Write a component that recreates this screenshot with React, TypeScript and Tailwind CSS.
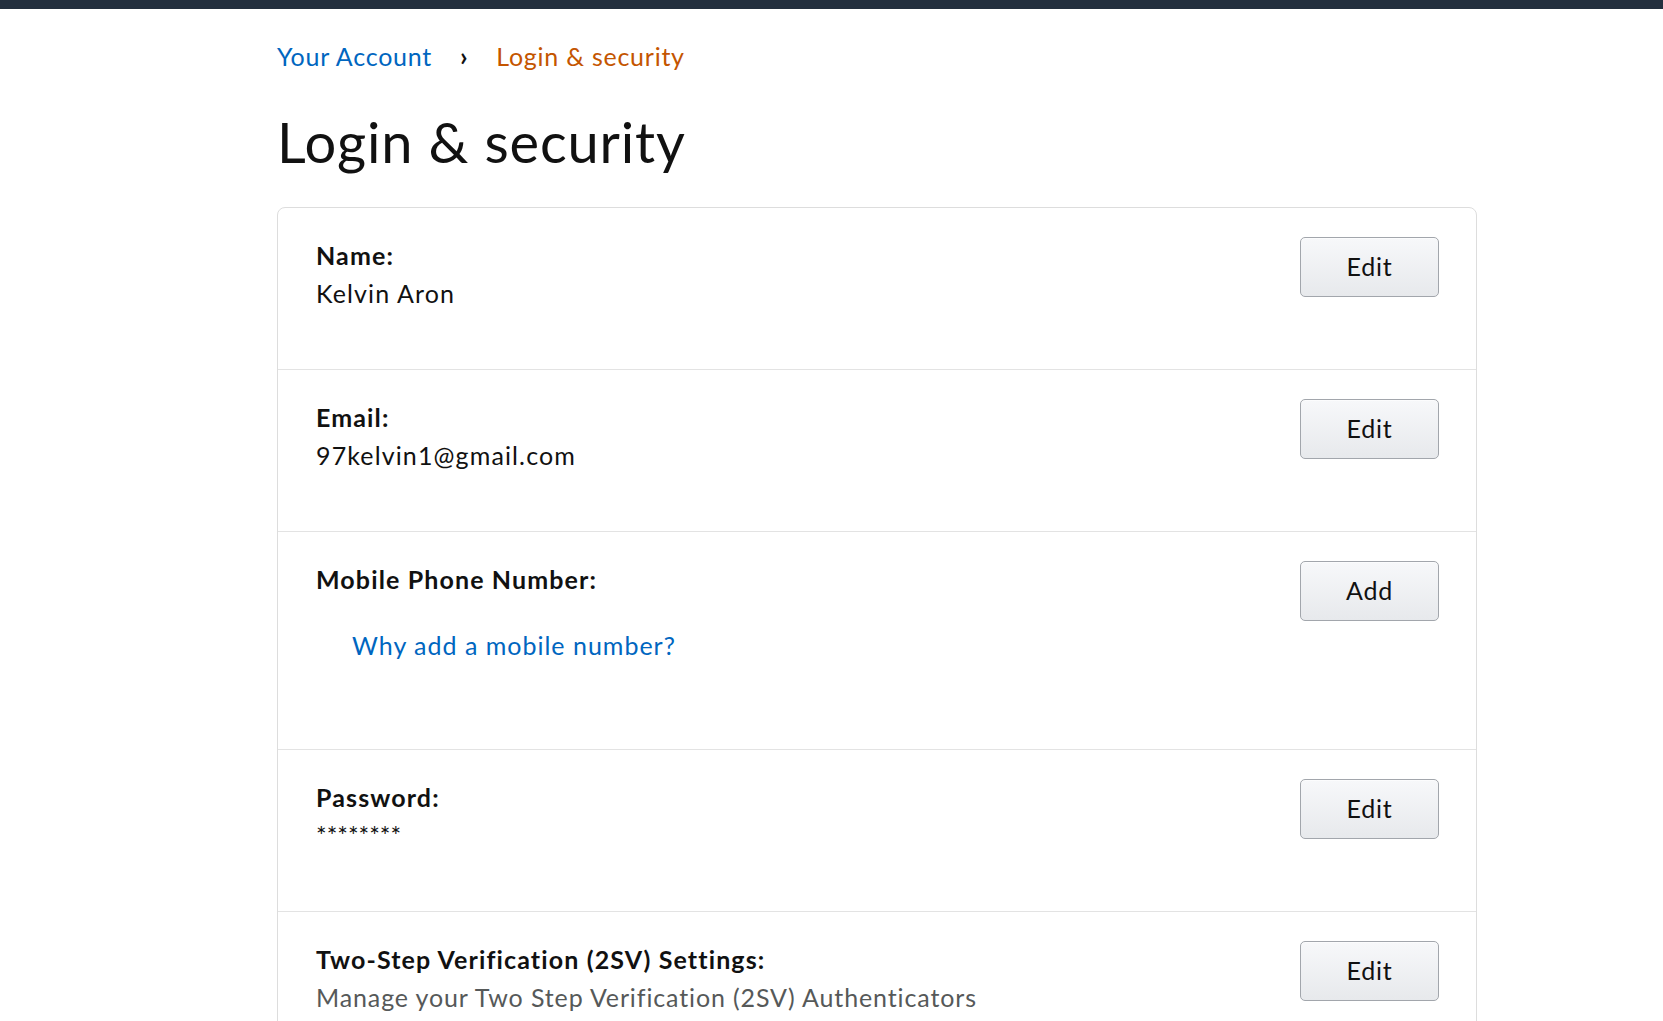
import React from "react";

type Row = {
  label: string;
  value?: string;
  muted?: boolean;
  secret?: boolean;
  action: string;
  link?: string;
};

const rows: Row[] = [
  { label: "Name:", value: "Kelvin Aron", action: "Edit" },
  { label: "Email:", value: "97kelvin1@gmail.com", action: "Edit" },
  { label: "Mobile Phone Number:", link: "Why add a mobile number?", action: "Add" },
  { label: "Password:", value: "********", secret: true, action: "Edit" },
  {
    label: "Two-Step Verification (2SV) Settings:",
    value: "Manage your Two Step Verification (2SV) Authenticators",
    muted: true,
    action: "Edit",
  },
];

function ActionButton({ children }: { children: React.ReactNode }) {
  return (
    <button
      type="button"
      className="mt-[1px] h-[60px] w-[139px] shrink-0 rounded-[5px] border border-[#a2a6ac] bg-gradient-to-b from-[#f7f8fa] to-[#e7e9ec] text-[25px] tracking-[0.03em] text-[#111111] shadow-[inset_0_1px_0_rgba(255,255,255,0.6)]"
    >
      {children}
    </button>
  );
}

function SettingRow({ row, first }: { row: Row; first: boolean }) {
  let valueClass = "";
  if (row.muted) valueClass = "text-[#565959] tracking-[0.035em]";
  if (row.secret) valueClass = "tracking-normal";

  return (
    <div
      className={
        first
          ? "flex items-start justify-between pl-[38px] pr-[37px] pt-[28px] pb-[57px]"
          : "flex items-start justify-between border-t border-[#e3e3e3] pl-[38px] pr-[37px] pt-[28px] pb-[57px]"
      }
    >
      <div className="text-[25px] leading-[38px] tracking-[0.045em] text-[#111111]">
        <div className="font-bold">{row.label}</div>
        {row.value && <div className={valueClass}>{row.value}</div>}
        {row.link && (
          <div className="mt-[28px] mb-[28px] pl-[36px] tracking-[0.04em]">
            <a href="#" className="text-[#0066c0]">
              {row.link}
            </a>
          </div>
        )}
      </div>
      <ActionButton>{row.action}</ActionButton>
    </div>
  );
}

export default function App() {
  return (
    <div className="min-h-screen bg-white font-['Lato',sans-serif] text-[#111111]">
      <div className="h-[9px] bg-[#232f3e]" />
      <div className="pl-[277px]">
        <nav className="mt-[29px] flex items-center text-[25px] leading-[36px] tracking-[0.03em]">
          <a href="#" className="text-[#0066c0]">
            Your Account
          </a>
          <span className="mx-[28px] text-[26px] font-bold text-[#111111]">›</span>
          <span className="text-[#c45500]">Login &amp; security</span>
        </nav>
        <h1 className="mt-[34px] text-[56px] leading-[67px] font-normal tracking-[0.015em]">
          Login &amp; security
        </h1>
        <div className="mt-[32px] w-[1200px] rounded-[8px] border border-[#dddddd]">
          {rows.map((row, i) => (
            <SettingRow key={row.label} row={row} first={i === 0} />
          ))}
        </div>
      </div>
    </div>
  );
}
